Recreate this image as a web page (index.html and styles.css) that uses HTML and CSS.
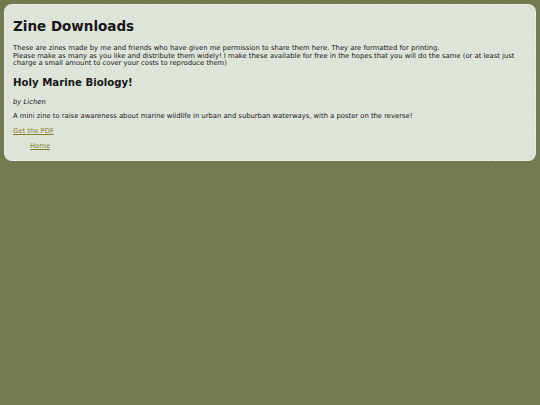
FILE: index.html
```html
<!DOCTYPE html>
<html>
<head>
<meta charset="utf-8">
<title>Zine Downloads</title>
<link rel="stylesheet" href="styles.css">
</head>
<body>
<div class="page">
  <h1 class="title">Zine Downloads</h1>
  <p class="intro">These are zines made by me and friends who have given me permission to share them here. They are formatted for printing.<br>Please make as many as you like and distribute them widely! I make these available for free in the hopes that you will do the same (or at least just charge a small amount to cover your costs to reproduce them)</p>
  <h2 class="zine-title">Holy Marine Biology!</h2>
  <p class="author">by Lichen</p>
  <p class="desc">A mini zine to raise awareness about marine wildlife in urban and suburban waterways, with a poster on the reverse!</p>
  <p class="pdf"><a href="#">Get the PDF</a></p>
  <ul class="nav">
    <li><a href="#">Home</a></li>
  </ul>
</div>
</body>
</html>
```

FILE: styles.css
```css
html, body {
  margin: 0;
  padding: 0;
}
body {
  background: #747a4f;
  padding: 4px;
  font-family: "DejaVu Sans", Verdana, sans-serif;
  color: #161616;
}
.page {
  background: #dfe4da;
  border: 1px dashed #f4f4ee;
  border-radius: 8px;
  padding: 12px 8px 10px 8px;
}
.title {
  margin: 0 0 10px 0;
  font-size: 13.5px;
  font-weight: bold;
  line-height: 18px;
}
.intro {
  margin: 0 0 8px 0;
  font-size: 6.8px;
  line-height: 7.6px;
}
.zine-title {
  margin: 0 0 9.5px 0;
  font-size: 10.2px;
  line-height: 13px;
}
.author {
  margin: 0 0 6px 0;
  font-size: 6.8px;
  line-height: 8px;
  font-style: italic;
}
.desc, .pdf {
  margin: 0 0 7px 0;
  font-size: 6.8px;
  line-height: 8px;
}
a {
  color: #82822c;
}
.nav {
  list-style: none;
  margin: 0;
  padding: 0 0 0 17px;
  font-size: 6.8px;
  line-height: 8px;
}
```
